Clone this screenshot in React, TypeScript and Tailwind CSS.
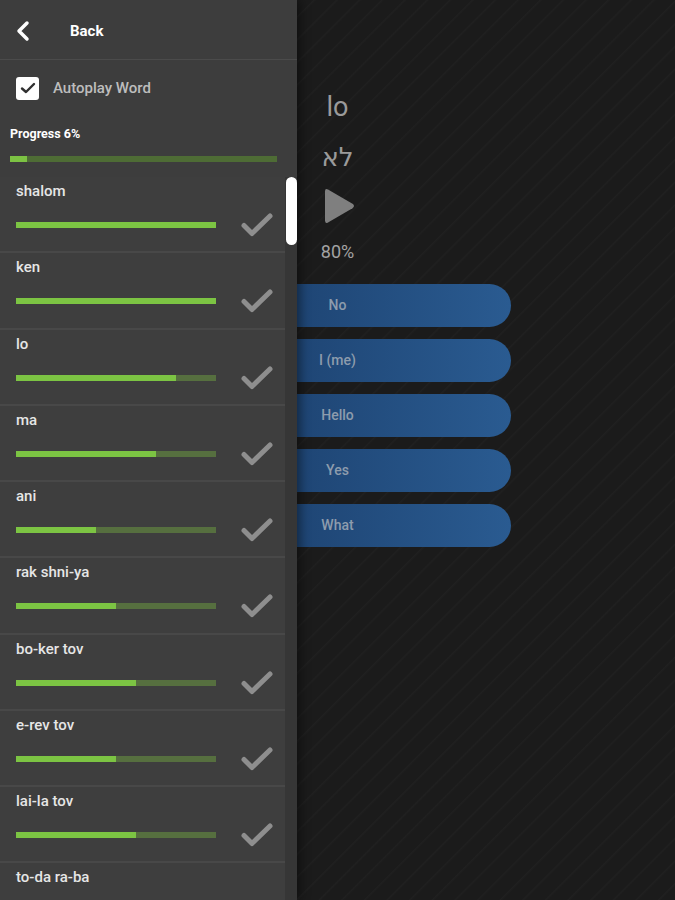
import React from "react";

const words: { name: string; pct: number; done: boolean }[] = [
  { name: "shalom", pct: 100, done: true },
  { name: "ken", pct: 100, done: true },
  { name: "lo", pct: 80, done: true },
  { name: "ma", pct: 70, done: true },
  { name: "ani", pct: 40, done: true },
  { name: "rak shni-ya", pct: 50, done: true },
  { name: "bo-ker tov", pct: 60, done: true },
  { name: "e-rev tov", pct: 50, done: true },
  { name: "lai-la tov", pct: 60, done: true },
  { name: "to-da ra-ba", pct: 50, done: false },
];

const answers = ["No", "I (me)", "Hello", "Yes", "What"];

function Check() {
  return (
    <svg width="32" height="26" viewBox="0 0 32 26" className="shrink-0">
      <polyline
        points="3,13.5 11,21.5 29,4"
        fill="none"
        stroke="#8e8e8e"
        strokeWidth="5"
        strokeLinecap="round"
        strokeLinejoin="round"
      />
    </svg>
  );
}

export default function App() {
  return (
    <div className="relative w-[675px] h-[900px] overflow-hidden bg-[#1c1c1c] bg-[repeating-linear-gradient(135deg,#1b1b1b_0px,#1b1b1b_13px,#202020_14px,#1b1b1b_16px)] font-[family-name:Roboto,'DejaVu_Sans',sans-serif]">
      {/* main content */}
      <div className="flex flex-col items-center pt-[91px]">
        <div className="text-[27px] leading-[32px] text-[#9a9a9a]">lo</div>
        <div className="mt-[19px] text-[26px] leading-[30px] text-[#9a9a9a] font-[family-name:'DejaVu_Sans',sans-serif]">
          לא
        </div>
        <svg width="36" height="38" viewBox="0 0 36 38" className="mt-[15px] ml-[2px]">
          <path
            d="M4 4.5 Q4 1 7 2.6 L31.5 16.8 Q34.5 19 31.5 21.2 L7 35.4 Q4 37 4 33.5 Z"
            fill="#7f7f7f"
          />
        </svg>
        <div className="mt-[16px] text-[18px] leading-[22px] text-[#a3a3a3]">80%</div>
        <div className="mt-[21px] flex flex-col gap-[12px]">
          {answers.map((a) => (
            <div
              key={a}
              className="w-[346px] h-[43px] rounded-full bg-linear-to-r from-[#183964] to-[#2a5b91] flex items-center justify-center text-[14px] font-medium text-[#8d9cad]"
            >
              {a}
            </div>
          ))}
        </div>
      </div>

      {/* drawer */}
      <div className="absolute left-0 top-0 w-[297px] h-[900px] bg-[#3d3d3d] shadow-[3px_0_10px_rgba(0,0,0,0.45)] flex flex-col overflow-hidden">
        <div className="h-[60px] shrink-0 flex items-center pt-[3px] border-b border-[#4b4b4b]">
          <svg width="20" height="22" viewBox="0 0 20 22" className="ml-[14px]">
            <polyline
              points="13,3 5,11 13,19"
              fill="none"
              stroke="#ffffff"
              strokeWidth="3.5"
              strokeLinecap="round"
              strokeLinejoin="round"
            />
          </svg>
          <span className="ml-[36px] text-[15px] font-bold text-white">Back</span>
        </div>
        <div className="flex items-center h-[56px] pl-[16px] shrink-0">
          <div className="w-[23px] h-[23px] rounded-[3px] bg-white flex items-center justify-center">
            <svg width="16" height="14" viewBox="0 0 16 14">
              <polyline
                points="2,7.5 6,11 14,3"
                fill="none"
                stroke="#303030"
                strokeWidth="2.4"
                strokeLinecap="round"
                strokeLinejoin="round"
              />
            </svg>
          </div>
          <span className="ml-[14px] text-[15px] font-medium text-[#bdbdbd]">Autoplay Word</span>
        </div>
        <div className="pl-[10px] pt-[10px] text-[12.5px] leading-[16px] font-bold text-white shrink-0">
          Progress 6%
        </div>
        <div className="ml-[10px] mt-[14px] w-[267px] h-[6px] bg-[#4e6c35] shrink-0">
          <div className="h-full w-[17px] bg-[#7cc243]" />
        </div>
        <div className="mt-[15px] flex flex-1 bg-[#363636]">
          <div className="w-[285px] flex flex-col">
            {words.map((w) => (
              <div
                key={w.name}
                className="h-[76.25px] shrink-0 bg-[#3e3e3e] border-b-2 border-[#484848] pl-[16px] pt-[4px]"
              >
                <div className="text-[15px] leading-[20px] font-medium text-[#e6e6e6]">{w.name}</div>
                <div className="mt-[11px] h-[26px] flex items-center">
                  <div className="w-[200px] h-[6px] bg-[#566f3f]">
                    <div className="h-full bg-[#7cc443]" style={{ width: `${w.pct}%` }} />
                  </div>
                  <div className="ml-[25px]">{w.done && <Check />}</div>
                </div>
              </div>
            ))}
          </div>
          <div className="flex-1 flex justify-center">
            <div className="w-[11px] h-[68px] rounded-full bg-white" />
          </div>
        </div>
      </div>
    </div>
  );
}
